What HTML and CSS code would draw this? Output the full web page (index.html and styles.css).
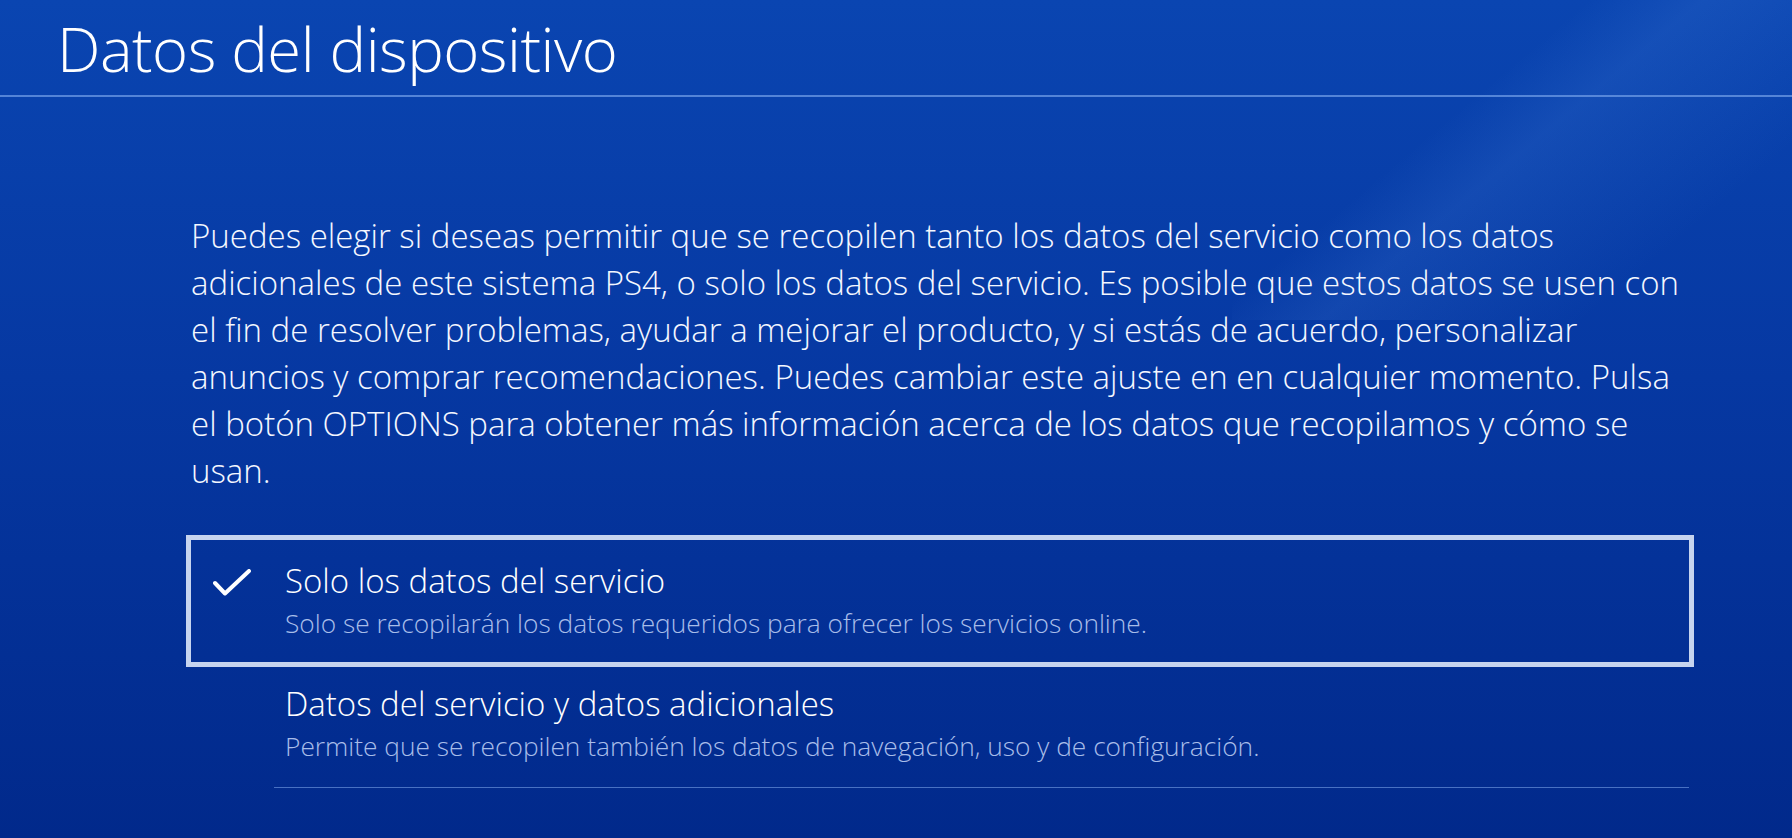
FILE: index.html
```html
<!DOCTYPE html>
<html>
    <head>
        <title>Datos del dispositivo</title>
        <link rel="stylesheet" href="styles.css">
    </head>
    <body>
        <div class="header">
            <h1 class="title">Datos del dispositivo</h1>
        </div>

        <div class="content">
            <p class="description">
                Puedes elegir si deseas permitir que se recopilen tanto los datos del servicio como los datos
                adicionales de este sistema PS4, o solo los datos del servicio. Es posible que estos datos se usen con
                el fin de resolver problemas, ayudar a mejorar el producto, y si estás de acuerdo, personalizar
                anuncios y comprar recomendaciones. Puedes cambiar este ajuste en en cualquier momento. Pulsa
                el botón OPTIONS para obtener más información acerca de los datos que recopilamos y cómo se
                usan.
            </p>

            <div class="options">
                <div class="option selected">
                    <div class="check-col">
                        <svg class="check-icon" width="38" height="28" viewBox="0 0 38 28">
                            <polyline points="2,14 12,24.5 36,2" fill="none" stroke="#ffffff" stroke-width="4" stroke-linecap="round" stroke-linejoin="round"/>
                        </svg>
                    </div>
                    <div class="option-body">
                        <div class="option-title">Solo los datos del servicio</div>
                        <div class="option-sub">Solo se recopilarán los datos requeridos para ofrecer los servicios online.</div>
                    </div>
                </div>

                <div class="option">
                    <div class="check-col"></div>
                    <div class="option-body divided">
                        <div class="option-title">Datos del servicio y datos adicionales</div>
                        <div class="option-sub">Permite que se recopilen también los datos de navegación, uso y de configuración.</div>
                    </div>
                </div>
            </div>
        </div>
    </body>
</html>
```

FILE: styles.css
```css
html, body {
    margin: 0;
    height: 100%;
}

body {
    overflow: hidden;
    color: #ffffff;
    font-family: "Open Sans", "Noto Sans", sans-serif;
    font-weight: 300;
    background:
        linear-gradient(140deg, rgba(90,150,235,0) 38%, rgba(90,150,235,0.14) 50%, rgba(90,150,235,0.08) 62%, rgba(90,150,235,0) 78%) top right / 560px 320px no-repeat,
        linear-gradient(180deg, #0a45b1 0%, #0638a2 45%, #01298b 100%);
}

.header {
    height: 97px;
    padding-left: 57px;
    border-bottom: 2px solid rgba(110,155,230,0.75);
    box-sizing: border-box;
}

.title {
    margin: 0;
    font-size: 61.5px;
    font-weight: 300;
    line-height: 96px;
    letter-spacing: -0.5px;
}

.content {
    margin-left: 186px;
    width: 1508px;
}

.description {
    width: 1500px;
    margin: 115px 0 41px 5px;
    font-size: 33px;
    line-height: 47px;
    color: #f4f7ff;
}

.option {
    display: flex;
    border: 5px solid transparent;
}

.option.selected {
    border-color: #c6d4ef;
}

.check-col {
    width: 83px;
    flex-shrink: 0;
}

.check-icon {
    display: block;
    margin: 29px 0 0 22px;
}

.option-body {
    flex: 1;
    padding: 21px 0 17px 11px;
}

.option-body.divided {
    padding: 12px 0 19px 11px;
    border-bottom: 1px solid rgba(120,160,230,0.6);
}

.option-title {
    font-size: 33px;
    line-height: 40px;
}

.option-sub {
    font-size: 26.3px;
    line-height: 44px;
    color: #a8bde9;
}
```
